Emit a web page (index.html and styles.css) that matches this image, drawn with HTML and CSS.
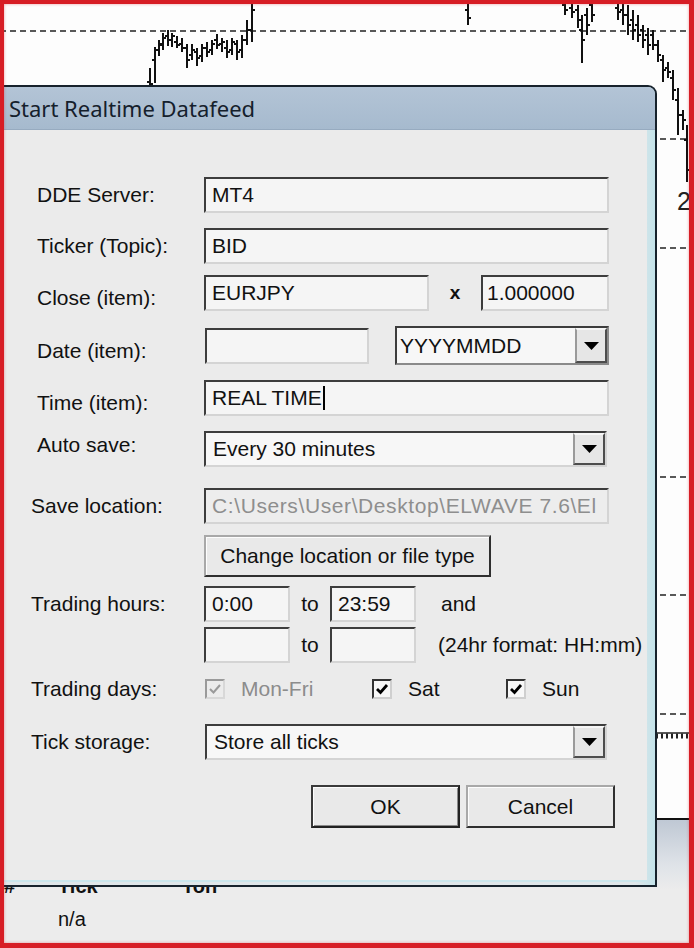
FILE: index.html
```html
<!DOCTYPE html>
<html lang="en">
<head>
    <meta charset="UTF-8">
    <meta name="viewport" content="width=device-width, initial-scale=1.0">
    <title>Start Realtime Datafeed</title>
    <link rel="stylesheet" href="styles.css">
</head>
<body>
<div class="screen">
    <!-- chart behind the dialog -->
    <svg class="chart" width="694" height="818" viewBox="0 0 694 818">
        <g class="grid-lines">
            <line x1="0" y1="31" x2="694" y2="31"/>
            <line x1="0" y1="139" x2="694" y2="139"/>
            <line x1="0" y1="248" x2="694" y2="248"/>
            <line x1="0" y1="477" x2="694" y2="477"/>
            <line x1="0" y1="595" x2="694" y2="595"/>
            <line x1="0" y1="714" x2="694" y2="714"/>
        </g>
        <line class="axis" x1="655" y1="733" x2="694" y2="733"/>
        <line class="axis-ticks" x1="656" y1="736" x2="694" y2="736"/>
        <path class="bars" d="M150 68V85M147 82H150M150 84H153M155 47V83M152 60H155M155 50H158M159 40V56M156 50H159M159 44H162M163 33V50M160 45H163M163 38H166M168 30V46M165 36H168M168 40H171M172 33V47M169 40H172M172 36H175M177 36V48M174 42H177M177 45H180M182 38V52M179 44H182M182 48H185M187 44V68M184 48H187M187 60H190M192 44V60M189 55H192M192 50H195M197 48V66M194 52H197M197 58H200M202 44V62M199 56H202M202 48H205M207 42V57M204 48H207M207 52H210M212 40V55M209 50H212M212 44H215M217 34V49M214 40H217M217 45H220M222 38V52M219 44H222M222 42H225M227 40V58M224 48H227M227 52H230M232 38V55M229 50H232M232 42H235M237 40V60M234 44H237M237 52H240M242 35V58M239 50H242M242 40H245M247 20V45M244 40H247M247 30H250M252 0V42M249 30H252M252 10H255M468 0V25M465 10H468M468 18H471M565 0V15M562 5H565M565 10H568M572 0V18M569 8H572M572 12H575M578 5V28M575 10H578M578 20H581M582 15V63M579 30H582M582 40H585M587 8V35M584 15H587M587 25H590M592 0V22M589 5H592M592 15H595M618 0V20M615 8H618M618 12H621M623 0V25M620 10H623M623 15H626M628 5V35M625 15H628M628 25H631M633 10V40M630 20H633M633 30H636M638 15V42M635 25H638M638 35H641M643 25V48M640 30H643M643 40H646M648 28V55M645 35H648M648 45H651M653 30V50M650 35H653M653 45H656M658 40V62M655 45H658M658 55H661M663 55V82M660 60H663M663 70H666M668 62V78M665 68H668M668 72H671M673 70V100M670 78H673M673 90H676M678 88V135M675 100H678M678 115H681M683 110V130M680 115H683M683 120H686M687 125V182M684 140H687M687 170H690"/>
        <text class="axis-label" x="677" y="210">2</text>
    </svg>

    <!-- panel under the dialog -->
    <div class="lower">
        <div class="lower-grid">
            <b>#</b><b>Tick</b><b>Ton</b>
            <span></span><span>n/a</span><span></span>
        </div>
    </div>

    <div class="window">
        <div class="titlebar">Start Realtime Datafeed</div>
        <div class="client">
            <div class="row">
                <span class="label">DDE Server:</span>
                <div class="field grow">MT4</div>
            </div>
            <div class="row">
                <span class="label">Ticker (Topic):</span>
                <div class="field grow">BID</div>
            </div>
            <div class="row row-close">
                <span class="label label-low">Close (item):</span>
                <div class="field w-close">EURJPY</div>
                <span class="times">x</span>
                <div class="field w-mult">1.000000</div>
            </div>
            <div class="row">
                <span class="label label-low">Date (item):</span>
                <div class="field w-date"></div>
                <div class="combo combo-list w-format">
                    <span class="combo-text">YYYYMMDD</span>
                    <span class="combo-btn"><svg width="15" height="8" viewBox="0 0 15 8"><polygon points="0,0 15,0 7.5,8"/></svg></span>
                </div>
            </div>
            <div class="row">
                <span class="label label-low">Time (item):</span>
                <div class="field grow">REAL TIME<span class="caret"></span></div>
            </div>
            <div class="row">
                <span class="label label-high">Auto save:</span>
                <div class="combo w-combo">
                    <span class="combo-text">Every 30 minutes</span>
                    <span class="combo-btn"><svg width="15" height="8" viewBox="0 0 15 8"><polygon points="0,0 15,0 7.5,8"/></svg></span>
                </div>
            </div>
            <div class="row row-save">
                <span class="label label-wide">Save location:</span>
                <div class="field field-disabled grow">C:\Users\User\Desktop\ELWAVE 7.6\El</div>
            </div>
            <div class="row row-change">
                <span class="label"></span>
                <div class="btn btn-change">Change location or file type</div>
            </div>
            <div class="row row-hours">
                <span class="label label-wide">Trading hours:</span>
                <div class="field w-time">0:00</div>
                <span class="to">to</span>
                <div class="field w-time">23:59</div>
                <span class="note note-and">and</span>
            </div>
            <div class="row row-hours2">
                <span class="label"></span>
                <div class="field w-time"></div>
                <span class="to">to</span>
                <div class="field w-time"></div>
                <span class="note">(24hr format: HH:mm)</span>
            </div>
            <div class="row row-days">
                <span class="label label-wide">Trading days:</span>
                <label class="check check-monfri disabled">
                    <span class="box"><svg width="16" height="16" viewBox="0 0 16 16"><polyline points="3,8 6.5,11.5 13,4"/></svg></span>
                    Mon-Fri
                </label>
                <label class="check check-sat">
                    <span class="box"><svg width="16" height="16" viewBox="0 0 16 16"><polyline points="3,8 6.5,11.5 13,4"/></svg></span>
                    Sat
                </label>
                <label class="check">
                    <span class="box"><svg width="16" height="16" viewBox="0 0 16 16"><polyline points="3,8 6.5,11.5 13,4"/></svg></span>
                    Sun
                </label>
            </div>
            <div class="row row-tick">
                <span class="label label-wide">Tick storage:</span>
                <div class="combo w-tick">
                    <span class="combo-text">Store all ticks</span>
                    <span class="combo-btn"><svg width="15" height="8" viewBox="0 0 15 8"><polygon points="0,0 15,0 7.5,8"/></svg></span>
                </div>
            </div>
            <div class="row row-actions">
                <div class="btn btn-default btn-action">OK</div>
                <div class="btn btn-action">Cancel</div>
            </div>
        </div>
    </div>

    <div class="frame"></div>
</div>
</body>
</html>
```

FILE: styles.css
```css
* {
    box-sizing: border-box;
}

body {
    margin: 0;
    font-family: "Liberation Sans", Arial, sans-serif;
    font-size: 21px;
    color: #111;
}

.screen {
    position: relative;
    width: 694px;
    height: 948px;
    overflow: hidden;
    background: #fdfdfd;
}

.frame {
    position: absolute;
    inset: 0;
    border: solid #d71d25;
    border-width: 4px 5px 5px 4px;
    box-shadow: inset 0 0 3px rgba(215, 29, 37, 0.45);
    pointer-events: none;
}

/* chart */
.chart {
    position: absolute;
    left: 0;
    top: 0;
}

.chart .grid-lines line {
    stroke: #222;
    stroke-width: 1.5;
    stroke-dasharray: 6 4;
}

.chart .axis {
    stroke: #222;
    stroke-width: 1.5;
}

.chart .axis-ticks {
    stroke: #222;
    stroke-width: 5;
    stroke-dasharray: 2 3;
}

.chart .bars {
    fill: none;
    stroke: #111;
    stroke-width: 2;
}

.chart .axis-label {
    font-family: "Liberation Sans", Arial, sans-serif;
    font-size: 25px;
    fill: #222;
}

/* lower panel */
.lower {
    position: absolute;
    left: 0;
    right: 0;
    top: 818px;
    bottom: 0;
    border-top: 2px solid #111;
    background: linear-gradient(#bfc8d4, #dfe3e8 45px, #ececec 70px);
    padding: 54px 0 0 4px;
}

.lower-grid {
    display: grid;
    grid-template-columns: 54px 124px auto;
    row-gap: 9px;
    font-size: 20px;
    line-height: 24px;
}

/* dialog window */
.window {
    position: absolute;
    left: -6px;
    top: 85px;
    width: 663px;
    height: 802px;
    display: flex;
    flex-direction: column;
    border: 2px solid #17222c;
    border-left: none;
    border-top-right-radius: 9px;
    background: linear-gradient(90deg, #dfe6e9 97%, #c3e3ea);
    overflow: hidden;
}

.titlebar {
    flex: none;
    height: 43px;
    padding-left: 15px;
    font-family: "Noto Sans", sans-serif;
    font-size: 22px;
    line-height: 42px;
    color: #15202c;
    background: linear-gradient(#b3c4d6, #a6bace);
    border-bottom: 1px solid #97abc0;
}

.client {
    flex: 1;
    margin: 0 8px 3px 0;
    padding: 47px 38px 0 43px;
    background: #ebebeb;
    border-bottom: 2px solid #cbe6ec;
    display: flex;
    flex-direction: column;
    gap: 15px;
}

.row {
    display: flex;
    align-items: center;
    min-height: 36px;
}

.row-close { margin-top: -4px; }
.row-save { margin-top: 6px; }
.row-change { margin-top: -4px; }
.row-hours { margin-top: -6px; }
.row-hours2 { margin-top: -10px; }
.row-days { margin-top: -7px; }
.row-tick { margin-top: 2px; }
.row-actions {
    margin-top: 10px;
    margin-right: -6px;
    justify-content: flex-end;
    gap: 6px;
}

.label {
    flex: none;
    width: 167px;
    white-space: nowrap;
}

.label-wide {
    margin-left: -6px;
    width: 173px;
}

.label-low { margin-top: 10px; }
.label-high { margin-bottom: 8px; }

/* text boxes */
.field {
    height: 36px;
    display: flex;
    align-items: center;
    padding: 0 6px;
    background: #f5f5f5;
    border: 2px solid;
    border-color: #3d3d3d #d4d4d4 #d4d4d4 #3d3d3d;
    white-space: nowrap;
    overflow: hidden;
}

.field-disabled {
    background: #ededed;
    color: #8e8e8e;
    letter-spacing: 0.6px;
}

.grow { flex: 1; }
.w-close { width: 225px; }
.w-mult { width: 128px; padding-left: 4px; }
.w-date { width: 164px; margin-left: 1px; }
.w-time { flex: none; width: 86px; }

.caret {
    display: inline-block;
    width: 2px;
    height: 24px;
    margin-left: 1px;
    background: #000;
}

.times {
    width: 52px;
    text-align: center;
    font-size: 19px;
    font-weight: bold;
}

.to {
    flex: none;
    width: 40px;
    text-align: center;
}

.note {
    flex: none;
    margin-left: 22px;
    white-space: nowrap;
}

.note-and { margin-left: 25px; }

/* combo boxes */
.combo {
    height: 36px;
    display: flex;
    align-items: stretch;
    background: #f7f7f7;
    border: 2px solid;
    border-color: #3d3d3d #d4d4d4 #d4d4d4 #3d3d3d;
}

.combo-text {
    flex: 1;
    display: flex;
    align-items: center;
    padding-left: 7px;
    white-space: nowrap;
}

.combo-btn {
    width: 32px;
    display: flex;
    align-items: center;
    justify-content: center;
    background: #e6e6e6;
    border: 2px solid;
    border-color: #f6f6f6 #4d4d4d #4d4d4d #9a9a9a;
}

.combo-btn polygon { fill: #000; }

.combo-list {
    height: 39px;
    border-color: #3d3d3d #8a8a8a #8a8a8a #3d3d3d;
    margin-left: 26px;
}

.combo-list .combo-text { padding-left: 3px; }

.w-combo { width: 403px; }
.w-format { width: 214px; }
.w-tick { width: 402px; margin-left: 1px; }

/* check boxes */
.check {
    display: flex;
    align-items: center;
    gap: 16px;
    white-space: nowrap;
}

.check-monfri { width: 167px; margin-left: 1px; }
.check-sat { width: 134px; }

.box {
    width: 20px;
    height: 20px;
    border: 2px solid;
    border-color: #333 #cfcfcf #cfcfcf #333;
    background: #f8f8f8;
}

.box svg { display: block; }

.box polyline {
    fill: none;
    stroke: #000;
    stroke-width: 2.8;
}

.check.disabled { color: #8c8c8c; }
.check.disabled .box { border-color: #9a9a9a #d8d8d8 #d8d8d8 #9a9a9a; background: #ececec; }
.check.disabled .box polyline { stroke: #9a9a9a; stroke-width: 2; }

/* buttons */
.btn {
    display: flex;
    align-items: center;
    justify-content: center;
    background: #e9e9e9;
    border: 2px solid;
    border-color: #a8a8a8 #2f2f2f #2f2f2f #a8a8a8;
    box-shadow: inset 1px 1px #fdfdfd;
    white-space: nowrap;
}

.btn-change {
    width: 287px;
    height: 42px;
}

.btn-action {
    width: 149px;
    height: 43px;
}

.btn-default {
    border-color: #3a3a3a #222 #222 #3a3a3a;
    box-shadow: inset 1px 1px #fdfdfd, inset -1px -1px #8a8a8a;
}
```
